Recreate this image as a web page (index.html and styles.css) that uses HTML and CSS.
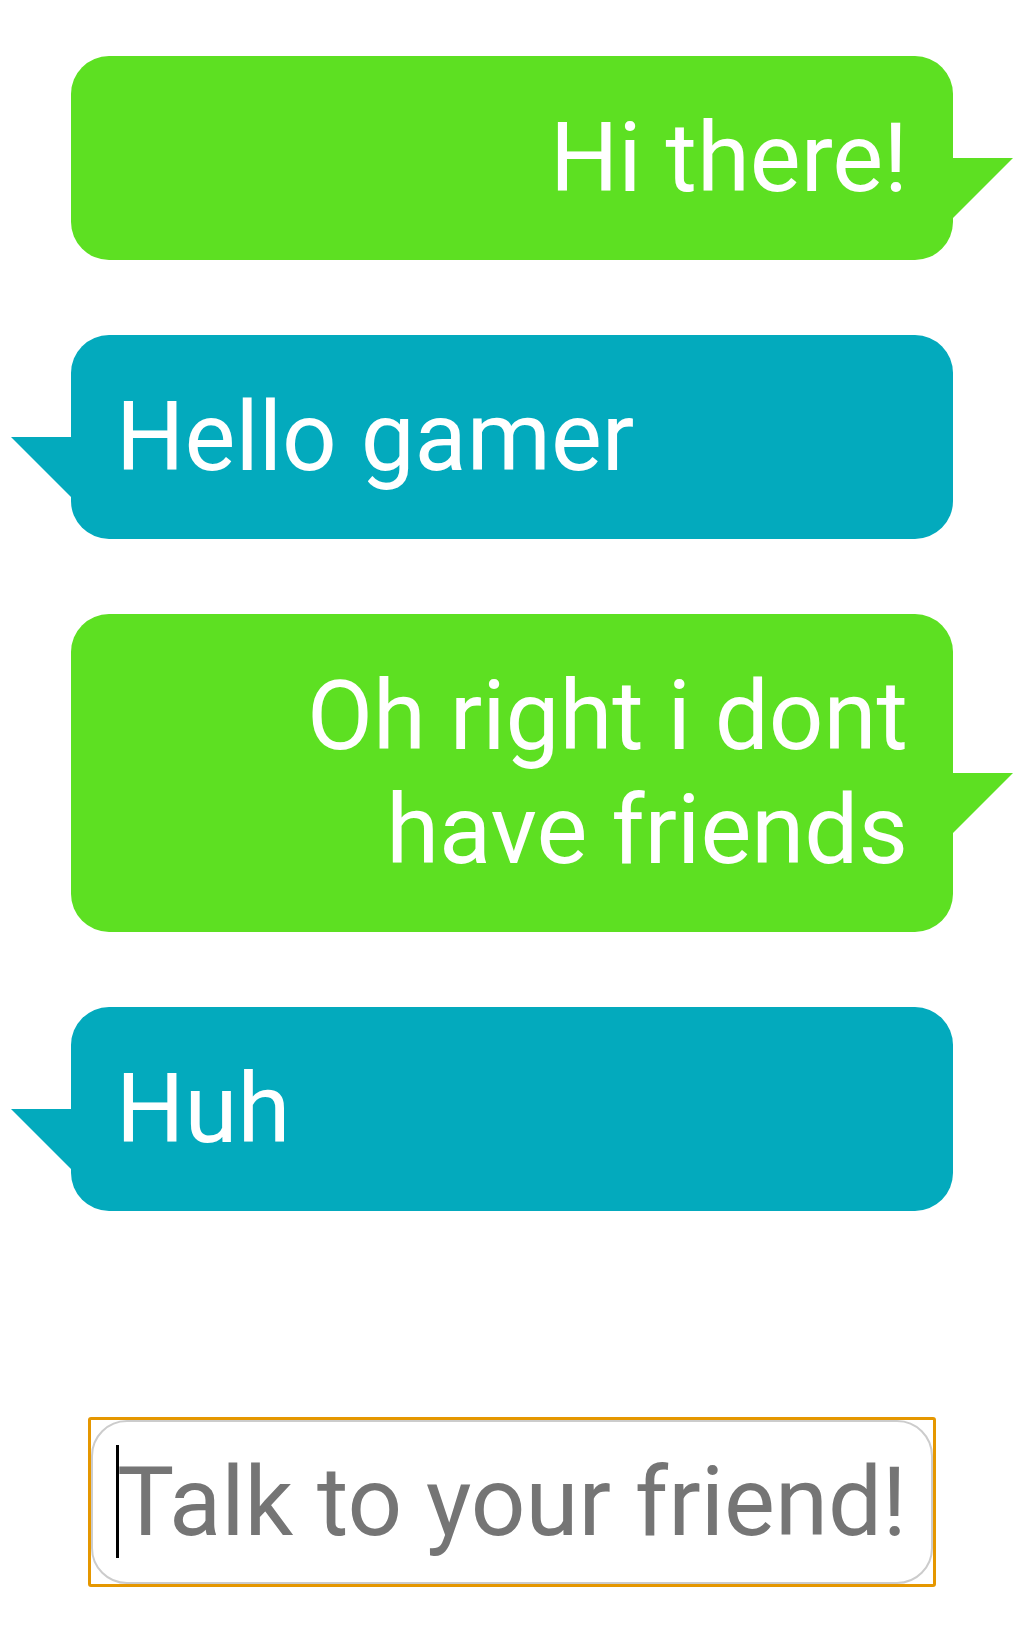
FILE: index.html
```html
<!DOCTYPE html>
<html lang="en">
<head>
<meta charset="utf-8">
<title>Chat</title>
<link rel="stylesheet" href="styles.css">
</head>
<body>
<main class="chat">
  <div class="bubble bubble--me">Hi there!</div>
  <div class="bubble bubble--friend">Hello gamer</div>
  <div class="bubble bubble--me">Oh right i dont<br>have friends</div>
  <div class="bubble bubble--friend">Huh</div>
</main>
<div class="composer">
  <input class="composer__input" type="text" placeholder="Talk to your friend!">
  <span class="composer__caret"></span>
</div>
</body>
</html>
```
FILE: styles.css
```css
html, body {
  margin: 0;
  padding: 0;
  background: #ffffff;
}

body {
  font-family: Roboto, "Liberation Sans", sans-serif;
  padding-top: 56px;
}

.chat {
  display: flex;
  flex-direction: column;
  gap: 75px;
  padding: 0 71px;
}

.bubble {
  position: relative;
  padding: 45px;
  border-radius: 38px;
  font-size: 96px;
  line-height: 114px;
  color: #ffffff;
}

.bubble::after {
  content: "";
  position: absolute;
  top: 50%;
  width: 0;
  height: 0;
  border-top: 60px solid transparent;
}

.bubble--me {
  background: #5de022;
  text-align: right;
}

.bubble--me::after {
  left: 100%;
  border-top-color: #5de022;
  border-right: 60px solid transparent;
}

.bubble--friend {
  background: #03aabd;
  text-align: left;
}

.bubble--friend::after {
  right: 100%;
  border-top-color: #03aabd;
  border-left: 60px solid transparent;
}

.composer {
  position: relative;
  margin: 206px 88px 0;
  padding: 0;
  border: 3px solid #e59700;
  border-radius: 3px;
}

.composer__input {
  display: block;
  box-sizing: border-box;
  width: 100%;
  margin: 0;
  padding: 23px 24px;
  border: 2px solid #cccccc;
  border-radius: 36px;
  background: #ffffff;
  font-family: Roboto, "Liberation Sans", sans-serif;
  font-size: 96px;
  line-height: 114px;
  height: 164px;
  color: #333333;
  caret-color: transparent;
  outline: none;
}

.composer__input::placeholder {
  color: #757575;
  opacity: 1;
}

.composer__caret {
  position: absolute;
  left: 25px;
  top: 25px;
  width: 3px;
  height: 113px;
  background: #000000;
}
```
